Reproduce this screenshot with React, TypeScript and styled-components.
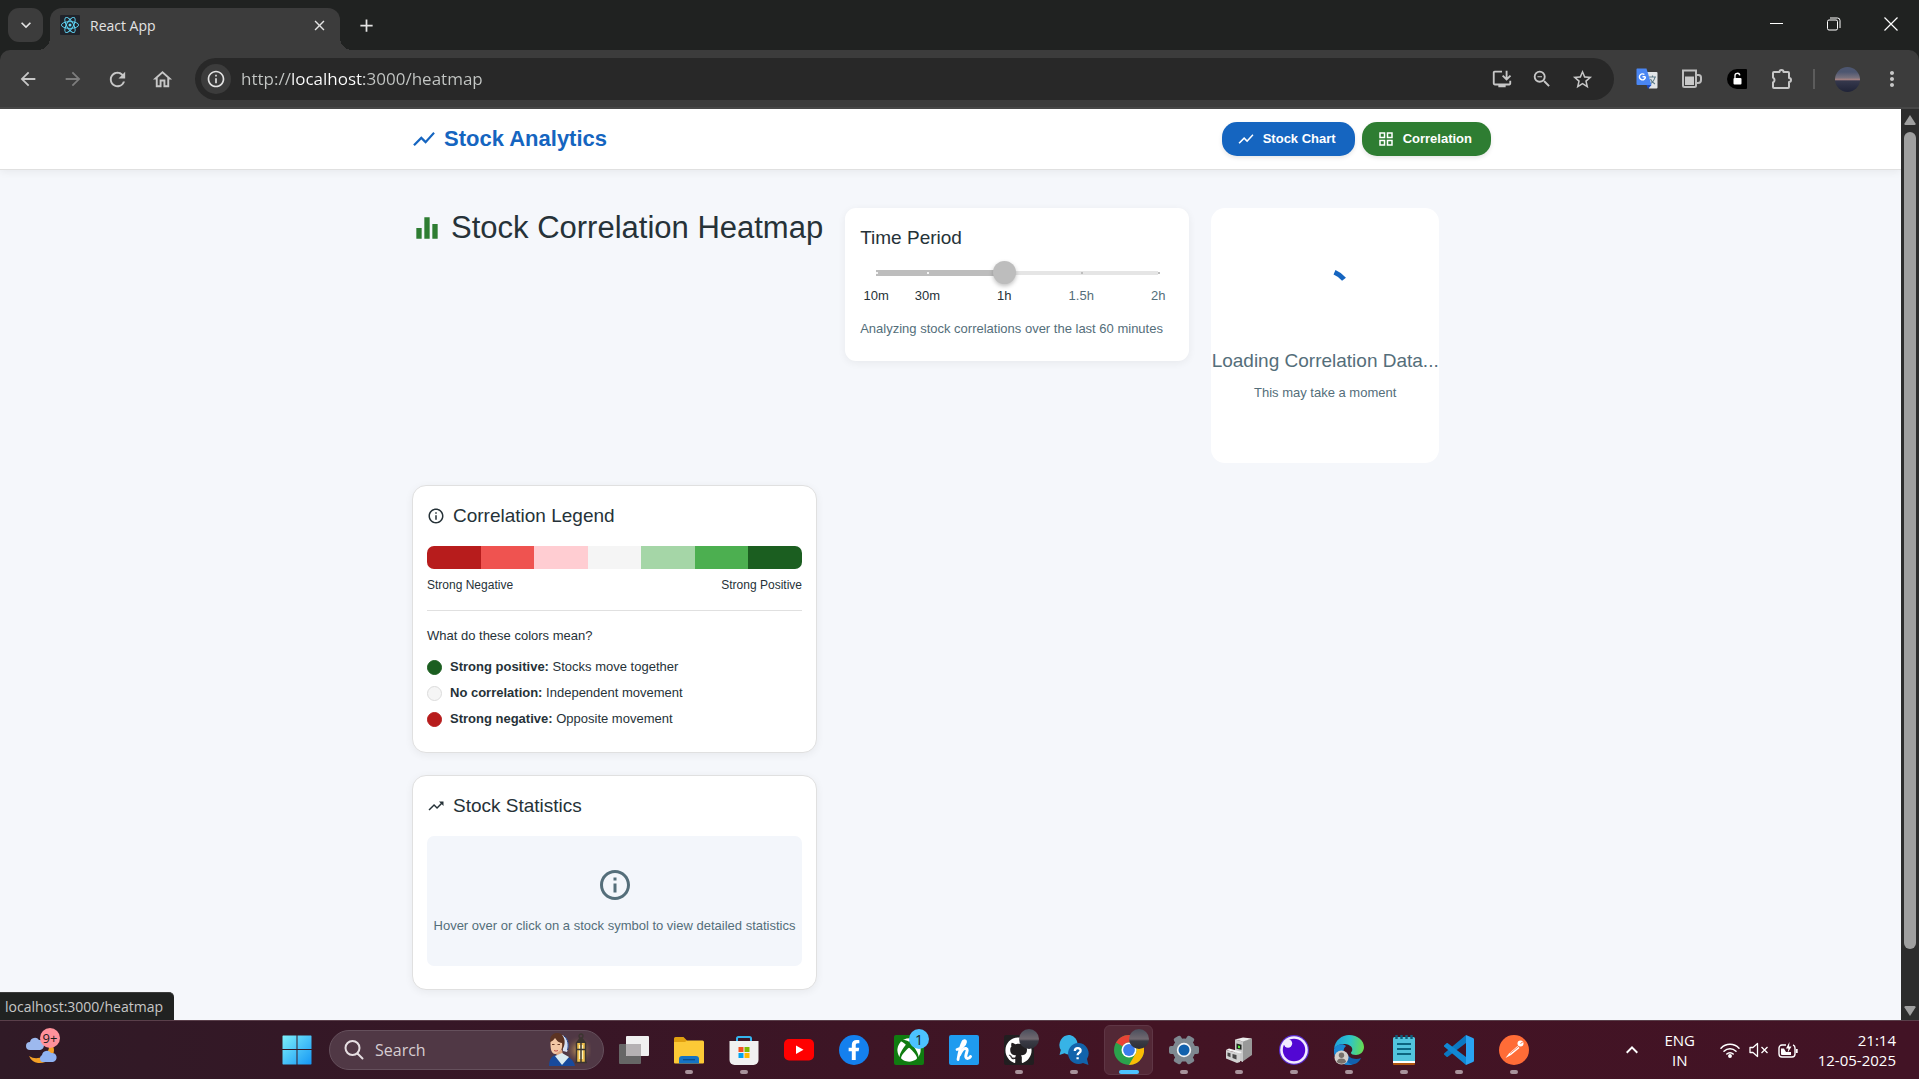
import React, { useState } from "react";
import styled, { createGlobalStyle, css } from "styled-components";
import {
  MdShowChart,
  MdOutlineGridView,
  MdEqualizer,
  MdInfoOutline,
  MdTrendingUp,
  MdArrowBack,
  MdArrowForward,
  MdRefresh,
  MdOutlineHome,
  MdStarBorder,
  MdZoomOut,
  MdMoreVert,
  MdOutlineInstallDesktop,
  MdKeyboardArrowDown,
  MdKeyboardArrowUp,
  MdClose,
  MdAdd,
} from "react-icons/md";
import { FaFacebookF, FaXbox, FaGithub } from "react-icons/fa";

const uiFont = `"Open Sans", "Noto Sans", sans-serif`;
const appFont = `"Liberation Sans", Arial, sans-serif`;

const GlobalStyle = createGlobalStyle`
  *, *::before, *::after { box-sizing: border-box; }
  body { margin: 0; background: #202221; font-family: ${appFont}; }
  button, input { font: inherit; color: inherit; border: 0; background: none; padding: 0; margin: 0; }
  svg { display: block; flex: none; }
  h1, h2, h3, p, ul { margin: 0; padding: 0; }
`;

const Desktop = styled.div`
  display: flex;
  flex-direction: column;
  height: 100vh;
  overflow: hidden;
`;

/* ---------- browser window ---------- */

const TabStrip = styled.header`
  display: flex;
  align-items: flex-start;
  height: 50px;
  padding: 8px 0 0 8px;
  background: #202221;
  color: #e3e3e3;
  font-family: ${uiFont};
`;

const TabSearch = styled.button`
  display: grid;
  place-items: center;
  width: 35px;
  height: 34px;
  margin-right: 7px;
  border-radius: 11px;
  background: #3c3c3c;
`;

const Tab = styled.div`
  position: relative;
  display: flex;
  align-items: center;
  gap: 10px;
  width: 290px;
  height: 42px;
  padding: 0 12px 8px 10px;
  border-radius: 12px 12px 0 0;
  background: #3c3c3c;
  font-size: 14px;

  &::before,
  &::after {
    content: "";
    position: absolute;
    bottom: 0;
    width: 12px;
    height: 12px;
  }
  &::before {
    right: 100%;
    background: radial-gradient(circle at 0 0, transparent 12px, #3c3c3c 12px);
  }
  &::after {
    left: 100%;
    background: radial-gradient(circle at 100% 0, transparent 12px, #3c3c3c 12px);
  }
`;

const TabTitle = styled.span`
  flex: 1;
`;

const PlainButton = styled.button`
  display: grid;
  place-items: center;
`;

const NewTab = styled(PlainButton)`
  width: 32px;
  height: 34px;
  margin-left: 10px;
`;

const WindowControls = styled.div`
  display: flex;
  margin-left: auto;
`;

const WindowButton = styled(PlainButton)`
  width: 57px;
  height: 32px;
  color: #fff;
`;

const ToolbarBack = styled.div`
  background: #202221;
`;

const Toolbar = styled.div`
  display: flex;
  align-items: center;
  height: 59px;
  padding: 1px 15px 0 9px;
  border-bottom: 2px solid #474747;
  border-radius: 10px 10px 0 0;
  background: #3c3c3c;
  color: #c7c7c7;
  font-family: ${uiFont};
`;

const ToolButton = styled(PlainButton)<{ $dim?: boolean; $w?: number }>`
  width: ${(p) => p.$w ?? 45}px;
  height: 36px;
  color: ${(p) => (p.$dim ? "#7d7d7d" : "inherit")};
`;

const Omnibox = styled.div`
  display: flex;
  align-items: center;
  flex: 1;
  height: 42px;
  margin: 0 10px 0 6px;
  padding: 0 12px 0 6px;
  border-radius: 21px;
  background: #282828;
`;

const SiteInfo = styled(PlainButton)`
  width: 30px;
  height: 30px;
  border-radius: 50%;
  background: #3c3c3c;
  color: #e3e3e3;
`;

const Address = styled.input`
  flex: 1;
  min-width: 0;
  margin-left: 10px;
  font-size: 17px;
  line-height: 24px;
  outline: 0;
  color: transparent;
  background: linear-gradient(90deg, #c4c7c5 50px, #fff 50px, #fff 123px, #c4c7c5 123px);
  background-clip: text;
`;

const Separator = styled.span`
  width: 2px;
  height: 20px;
  margin: 0 20px 0 9px;
  background: #5c5c5c;
`;

const Viewport = styled.div`
  position: relative;
  display: flex;
  flex: 1;
  min-height: 0;
`;

const Page = styled.div`
  flex: 1;
  overflow: hidden;
  background: #f5f7fb;
  color: #263238;
`;

const ScrollBar = styled.div`
  display: flex;
  flex-direction: column;
  align-items: center;
  width: 18px;
  padding: 5px 0 3px;
  background: #2c2c2c;
`;

const ScrollThumb = styled.div`
  width: 12px;
  flex: 1;
  margin: 6px 0 56px;
  border-radius: 6px;
  background: #9f9f9f;
`;

const StatusBubble = styled.div`
  position: absolute;
  left: 0;
  bottom: 0;
  height: 28px;
  padding: 0 11px 0 5px;
  border-top: 1px solid #3c3c3c;
  border-radius: 0 5px 0 0;
  background: #202221;
  color: #c7c7c7;
  font-family: ${uiFont};
  font-size: 14px;
  line-height: 28px;
`;

/* ---------- stock app ---------- */

const AppBar = styled.div`
  position: relative;
  padding: 0 24px;
  border-bottom: 1px solid #e0e0e0;
  background: #fff;
  box-shadow: 0 2px 8px rgba(0, 0, 0, 0.06);
`;

const AppBarInner = styled.div`
  display: flex;
  align-items: center;
  justify-content: space-between;
  max-width: 1081px;
  height: 60px;
  margin: 0 auto;
`;

const Brand = styled.div`
  display: flex;
  align-items: center;
  gap: 7px;
  padding-left: 1px;
  color: #1565c0;
  font-size: 22px;
  font-weight: 700;
`;

const Nav = styled.nav`
  display: flex;
  gap: 7px;
`;

const NavLink = styled.a<{ $color: string }>`
  display: flex;
  align-items: center;
  gap: 8px;
  height: 34px;
  padding: 0 19px 0 15px;
  border-radius: 15px;
  background: ${(p) => p.$color};
  color: #fff;
  font-size: 13px;
  font-weight: 700;
  line-height: 32px;
  padding-bottom: 1px;
  text-decoration: none;
  box-shadow: 0 2px 4px rgba(0, 0, 0, 0.1);
`;

const Content = styled.main`
  display: flex;
  flex-wrap: wrap;
  align-items: flex-start;
  gap: 22px;
  max-width: 1079px;
  margin: 0 auto;
  padding: 38px 0;
`;

const PageTitle = styled.h1`
  display: flex;
  align-items: center;
  gap: 8px;
  min-width: 411px;
  height: 40px;
  font-size: 31px;
  font-weight: 400;
  white-space: nowrap;

  svg {
    color: #2e7d32;
  }
`;

const cardBase = css`
  border-radius: 14px;
  background: #fff;
`;

const PeriodCard = styled.section`
  ${cardBase};
  width: 344px;
  padding: 17px 15px 22px;
  border-radius: 11px;
  box-shadow: 0 2px 8px rgba(0, 0, 0, 0.06);
`;

const CardTitle = styled.h2`
  display: flex;
  align-items: center;
  gap: 8px;
  font-size: 19px;
  font-weight: 400;
  line-height: 26px;
`;

const SliderWrap = styled.div`
  position: relative;
  margin: 10px 5px 0;
`;

const Range = styled.input<{ $fill: number }>`
  display: block;
  width: 100%;
  height: 23px;
  appearance: none;
  outline: 0;

  &::-webkit-slider-runnable-track {
    height: 23px;
    background:
      linear-gradient(#bdbdbd, #bdbdbd) 11px 50% / ${(p) => p.$fill}% 6px no-repeat,
      linear-gradient(#e5e5e5, #e5e5e5) 50% 50% / calc(100% - 22px) 4px no-repeat;
  }
  &::-webkit-slider-thumb {
    appearance: none;
    position: relative;
    z-index: 2;
    width: 23px;
    height: 23px;
    border-radius: 50%;
    background: #bdbdbd;
    box-shadow: 0 2px 4px rgba(0, 0, 0, 0.25);
  }
`;

const MarkRow = styled.div`
  display: grid;
  grid-template-columns: 20fr 30fr 30fr 30fr 0;
`;

const TickRow = styled(MarkRow)`
  position: absolute;
  top: 11px;
  left: 11px;
  right: 11px;
  pointer-events: none;
`;

const Tick = styled.span<{ $light?: boolean; $hidden?: boolean }>`
  width: 2px;
  height: 2px;
  visibility: ${(p) => (p.$hidden ? "hidden" : "visible")};
  background: ${(p) => (p.$light ? "#f5f5f5" : "#bdbdbd")};
`;

const LabelRow = styled(MarkRow)`
  margin: 2px 11px 0;
  font-size: 13px;
  line-height: 20px;
`;

const MarkLabel = styled.span<{ $active: boolean }>`
  display: flex;
  justify-content: center;
  width: 0;
  white-space: nowrap;
  color: ${(p) => (p.$active ? "#263238" : "#546e7a")};
`;

const Muted = styled.p`
  color: #546e7a;
  font-size: 13px;
  line-height: 20px;
  white-space: nowrap;
`;

const PeriodNote = styled(Muted)`
  margin-top: 13px;
`;

const LoadingCard = styled.section`
  ${cardBase};
  display: flex;
  flex-direction: column;
  align-items: center;
  width: 228px;
  padding: 59px 0 60px;

  h2 {
    margin: 27px 0 9px;
    color: #546e7a;
    font-size: 19px;
    font-weight: 400;
    line-height: 26px;
    white-space: nowrap;
  }
`;

const Sidebar = styled.aside`
  display: flex;
  flex-direction: column;
  gap: 22px;
  width: 405px;
  margin-left: 1px;
`;

const PanelCard = styled.section`
  ${cardBase};
  padding: 17px 14px 23px;
  border: 1px solid #e0e0e0;
  box-shadow: 0 2px 8px rgba(0, 0, 0, 0.06);
`;

const Scale = styled.div`
  display: grid;
  grid-template-columns: repeat(7, 1fr);
  height: 23px;
  margin-top: 17px;
  border-radius: 7px;
  overflow: hidden;
`;

const Swatch = styled.span<{ $color: string }>`
  background: ${(p) => p.$color};
`;

const ScaleLabels = styled.div`
  display: flex;
  justify-content: space-between;
  margin-top: 7px;
  padding-bottom: 16px;
  border-bottom: 1px solid #e0e0e0;
  font-size: 12px;
  line-height: 18px;
`;

const LegendQuestion = styled.h3`
  margin-top: 15px;
  font-size: 13px;
  font-weight: 400;
  line-height: 20px;
`;

const LegendList = styled.ul`
  display: grid;
  gap: 6px;
  margin-top: 11px;
  list-style: none;
`;

const LegendItem = styled.li`
  display: flex;
  align-items: center;
  gap: 8px;
  font-size: 13px;
  line-height: 20px;
`;

const Dot = styled.span<{ $color: string; $outlined?: boolean }>`
  width: 15px;
  height: 15px;
  border: 1px solid ${(p) => (p.$outlined ? "#dcdcdc" : p.$color)};
  border-radius: 50%;
  background: ${(p) => p.$color};
`;

const EmptyState = styled.div`
  display: flex;
  flex-direction: column;
  align-items: center;
  gap: 13px;
  margin-top: 17px;
  padding: 31px 0 30px;
  border-radius: 7px;
  background: #f3f6fb;
  color: #546e7a;
`;

/* ---------- taskbar ---------- */

const TaskBar = styled.footer`
  display: flex;
  align-items: center;
  height: 59px;
  border-top: 1px solid #5a3f4a;
  background: linear-gradient(90deg, #301a26, #381626 30%, #431424 60%, #421325);
  color: #fff;
  font-family: ${uiFont};
`;

const Weather = styled.button`
  position: relative;
  width: 40px;
  height: 40px;
  margin: 0 216px 0 22px;
`;

const Badge = styled.span<{ $color: string }>`
  position: absolute;
  top: -2px;
  right: 2px;
  display: grid;
  place-items: center;
  width: 20px;
  height: 20px;
  border-radius: 50%;
  background: ${(p) => p.$color};
  color: #1b1b1b;
  font-size: 13px;
  line-height: 20px;
`;

const StartButton = styled(PlainButton)`
  width: 38px;
  height: 44px;
  margin-right: 13px;
`;

const SearchBox = styled.label`
  display: flex;
  align-items: center;
  width: 275px;
  height: 40px;
  padding: 0 12px 0 14px;
  border: 1px solid #65505c;
  border-radius: 20px;
  background: #503845;
`;

const SearchInput = styled.input`
  flex: 1;
  min-width: 0;
  margin-left: 11px;
  outline: 0;
  font-size: 16px;
  &::placeholder {
    color: #d6cdd1;
    opacity: 1;
  }
`;

const TaskList = styled.div`
  display: flex;
  margin-left: 2px;
`;

const TaskButton = styled.button<{ $running?: boolean; $active?: boolean }>`
  position: relative;
  display: grid;
  place-items: center;
  width: 55px;
  height: 58px;

  &::before {
    content: "";
    position: absolute;
    inset: 4px 3px 4px 3px;
    border: 1px solid #5f3645;
    border-radius: 6px;
    background: #532836;
    display: ${(p) => (p.$active ? "block" : "none")};
  }
  &::after {
    content: "";
    position: absolute;
    bottom: 5px;
    width: ${(p) => (p.$active ? 20 : 8)}px;
    height: 4px;
    border-radius: 2px;
    background: ${(p) => (p.$active ? "#4cc2ff" : "#a8929b")};
    display: ${(p) => (p.$running || p.$active ? "block" : "none")};
  }
  svg {
    position: relative;
  }
`;

const Overlay = styled.span<{ $photo?: boolean }>`
  position: absolute;
  top: 8px;
  right: 7px;
  display: grid;
  place-items: center;
  width: 20px;
  height: 20px;
  border-radius: 50%;
  background: ${(p) =>
    p.$photo ? "linear-gradient(#4a4e5c, #716970 50%, #3a3b45 60%, #2c2e36)" : "#4cc2ff"};
  color: #1b1b1b;
  font-size: 14px;
`;

const Tray = styled.div`
  display: flex;
  align-items: center;
  margin-left: auto;
  padding-right: 23px;
  font-size: 15px;
  line-height: 20px;
`;

const Language = styled.button`
  width: 44px;
  margin: 0 18px 0 14px;
  text-align: center;
`;

const StatusIcons = styled.div`
  display: flex;
  align-items: center;
  gap: 9px;
`;

const Clock = styled.button`
  margin-left: 20px;
  text-align: right;
`;

const Avatar = styled.span`
  width: 25px;
  height: 25px;
  margin-right: 20px;
  border-radius: 50%;
  background: linear-gradient(#4d5670 20%, #76707d 42%, #a17f80 50%, #35384c 56%, #1f2337);
`;

/* ---------- drawings ---------- */

const ReactLogo = () => (
  <svg width="20" height="20" viewBox="0 0 20 20">
    <rect width="20" height="20" rx="1" fill="#20232a" />
    <circle cx="10" cy="10" r="1.5" fill="#61dafb" />
    <g fill="none" stroke="#61dafb" strokeWidth="0.9">
      <ellipse cx="10" cy="10" rx="8.6" ry="3.4" />
      <ellipse cx="10" cy="10" rx="8.6" ry="3.4" transform="rotate(60 10 10)" />
      <ellipse cx="10" cy="10" rx="8.6" ry="3.4" transform="rotate(120 10 10)" />
    </g>
  </svg>
);

const MinimizeIcon = () => (
  <svg width="14" height="14" viewBox="0 0 14 14">
    <path d="M0 6.5h13" stroke="currentColor" />
  </svg>
);

const RestoreIcon = () => (
  <svg width="14" height="14" viewBox="0 0 14 14" fill="none" stroke="currentColor">
    <rect x="0.5" y="3" width="10" height="10" rx="1.5" />
    <path d="M3 1h7.5a2.5 2.5 0 0 1 2.5 2.5V11" />
  </svg>
);

const CloseIcon = () => (
  <svg width="14" height="14" viewBox="0 0 14 14">
    <path d="M0.5 0.5l13 13M13.5 0.5l-13 13" stroke="currentColor" strokeWidth="1.2" />
  </svg>
);

const TranslateIcon = () => (
  <svg width="22" height="22" viewBox="0 0 22 22">
    <path d="M9 4h11.5a1 1 0 0 1 1 1v14.5a1 1 0 0 1-1 1H13z" fill="#e3e6e8" />
    <path d="M13 9h7M16.5 7.5V9M19 9c-.6 3-2.5 5.5-5 7M14.5 11c.8 2.5 2.5 4 4.5 5" fill="none" stroke="#607d8b" strokeWidth="1.1" />
    <path d="M10.5 17h5l-3.5 4z" fill="#1a49c2" />
    <path d="M1 .5h9.500l5 16.500H1.500a1 1 0 0 1-1-1V1z" fill="#4a86f3" />
    <path d="M9.4 8.700H6.500M9.400 8.700a3 3 0 1 1-1-2.100" fill="none" stroke="#fff" strokeWidth="1.4" />
  </svg>
);

const MugIcon = () => (
  <svg width="22" height="20" viewBox="0 0 22 20" fill="none" stroke="#bdbdbd" strokeWidth="2">
    <path d="M2 1.500h13v15a1.500 1.500 0 0 1-1.500 1.500h-10A1.500 1.500 0 0 1 2 16.500z" />
    <path d="M15 6h2.500a2.500 2.500 0 0 1 2.500 2.500v2.500a3 3 0 0 1-3 3h-2" />
    <path d="M4 7.500h9v8.500h-9z" fill="#c9c9c9" stroke="none" />
  </svg>
);

const LockExtensionIcon = () => (
  <svg width="20" height="20" viewBox="0 0 20 20">
    <path d="M10 0h9a1 1 0 0 1 1 1v18a1 1 0 0 1-1 1h-9A10 10 0 0 1 10 0z" fill="#000" />
    <rect x="6.5" y="9" width="8" height="6.5" rx="1" fill="#fff" />
    <path d="M8 9V7a2.400 2.400 0 0 1 4.800-.6" fill="none" stroke="#fff" strokeWidth="1.3" />
  </svg>
);

const PuzzleIcon = () => (
  <svg width="22" height="22" viewBox="0 0 22 22" fill="none" stroke="#c7c7c7" strokeWidth="2" strokeLinejoin="round">
    <path d="M3 4h5.500a2 2 0 0 1 4 0H17a1 1 0 0 1 1 1v5a2 2 0 0 1 0 4v5a1 1 0 0 1-1 1H3a1 1 0 0 1-1-1v-4.500a2.800 2.800 0 0 0 0-5V5a1 1 0 0 1 1-1z" />
  </svg>
);

const Spinner = () => (
  <svg width="54" height="54" viewBox="0 0 54 54" fill="none" role="img" aria-label="Loading">
    <path d="M36.500 5.200A24 24 0 0 1 46 12.300" stroke="#1565c0" strokeWidth="5" />
  </svg>
);

const WeatherIcon = () => (
  <svg width="40" height="40" viewBox="0 0 40 40">
    <path d="M27 13a13 13 0 0 1-20 13 12 12 0 0 0 9 7c9 1 16-6 16-13 0-3-2-6-5-7z" fill="#f4a126" />
    <path d="M8 20a4 4 0 0 1 0-8 5 5 0 0 1 9-2c3 0 5 2 5 5s-2 5-5 5z" fill="#9db9ee" />
    <path d="M20 32a4 4 0 0 1 0-7 5 5 0 0 1 9-2 4.500 4.500 0 0 1 2 9z" fill="#8fb2f2" />
  </svg>
);

const WindowsLogo = () => (
  <svg width="30" height="30" viewBox="0 0 30 30">
    <defs>
      <linearGradient id="win" x1="0" y1="0" x2="1" y2="1">
        <stop offset="0" stopColor="#7df0fb" />
        <stop offset="1" stopColor="#1597f5" />
      </linearGradient>
    </defs>
    <path d="M1 .5h13.500V14H.5V1zM15.500.5H29l.5.5v13h-14zM.5 15h14v14.500H1l-.5-.5zM15.500 15h14v14l-.5.5H15.500z" fill="url(#win)" />
  </svg>
);

const SearchGlass = () => (
  <svg width="20" height="22" viewBox="0 0 20 22" fill="none" stroke="#e6dfe2" strokeWidth="2" strokeLinecap="round">
    <circle cx="8.5" cy="9" r="7" />
    <path d="M13.500 14.500l5 5" />
  </svg>
);

const LampLady = () => (
  <svg width="44" height="36" viewBox="0 0 44 36">
    <defs>
      <radialGradient id="glow">
        <stop offset="0" stopColor="#d9a95c" />
        <stop offset="1" stopColor="#503845" stopOpacity="0" />
      </radialGradient>
    </defs>
    <circle cx="32" cy="18" r="15" fill="url(#glow)" />
    <path d="M15 3c6 2 8 10 5 17l-4-1z" fill="#d5dff2" />
    <path d="M17 4c4 3 5 9 3.500 14" stroke="#1d3f8a" fill="none" />
    <path d="M3 9C3 1 11-1 15 3c4 4 3 11 0 15L4 14z" fill="#5c3423" />
    <path d="M3.500 10c0 5 0 12 5 12s7.500-6 6.500-11C11 11 9 7 8 6c-1 2-3 3-4.500 4z" fill="#f2c7a5" />
    <path d="M5 12.500h2.500M10.500 12.500H13" stroke="#6b3e2a" />
    <path d="M7 18.500q2 1.200 4 0" stroke="#c4524b" fill="none" />
    <path d="M9 21.500l6-4 1 6-5 3z" fill="#e0a883" />
    <path d="M2 34c0-8 4-11 8-11 8 0 16 2 18 11z" fill="#174a9c" />
    <path d="M8 24l7-3 7 4-7 8z" fill="#dcebf0" />
    <circle cx="34" cy="4" r="2" fill="none" stroke="#3b3530" strokeWidth="1.3" />
    <path d="M28.500 11l4-5h3l4 5z" fill="#3b3530" />
    <rect x="29" y="11" width="10" height="19" fill="#eebf4c" />
    <path d="M32 13h4v14h-4z" fill="#fff3b8" />
    <path d="M29.500 11v19M34 11v19M38.500 11v19M29 17.500h10M28 30.500h12" stroke="#3b3530" strokeWidth="1.5" fill="none" />
  </svg>
);

const Icon30 = ({ children }: { children: React.ReactNode }) => (
  <svg width="30" height="30" viewBox="0 0 30 30">
    {children}
  </svg>
);

const TaskViewIcon = () => (
  <Icon30>
    <rect x="0" y="9" width="22" height="20" rx="1" fill="#666" />
    <rect x="7" y="1" width="23" height="20" rx="1" fill="#f0f0f0" />
    <path d="M7 9h15v12H8a1 1 0 0 1-1-1z" fill="#b5b1b3" />
  </Icon30>
);

const ExplorerIcon = () => (
  <Icon30>
    <path d="M0 3.500A1.500 1.500 0 0 1 1.500 2h8L13 5.500V12H0z" fill="#e0a010" />
    <path d="M0 7h11l2-1.500h15.500A1.500 1.500 0 0 1 30 7v20.500a1 1 0 0 1-1 1H1a1 1 0 0 1-1-1z" fill="#fcc936" />
    <path d="M5 28.500V24a3 3 0 0 1 3-3h14a3 3 0 0 1 3 3v4.500z" fill="#1573c4" />
    <path d="M9 24.700h12" stroke="#0b4a86" strokeWidth="1.2" />
  </Icon30>
);

const StoreIcon = () => (
  <Icon30>
    <path d="M8 7V3.500A1.500 1.500 0 0 1 9.500 2h11A1.500 1.500 0 0 1 22 3.500V7" fill="none" stroke="#35b4ee" strokeWidth="2" />
    <path d="M.5 6h29v19a5 5 0 0 1-5 5h-19a5 5 0 0 1-5-5z" fill="#f1f1f1" />
    <path d="M9.500 12h5v5h-5z" fill="#f25022" />
    <path d="M15.500 12h5v5h-5z" fill="#7fba00" />
    <path d="M9.500 18h5v5h-5z" fill="#00a4ef" />
    <path d="M15.500 18h5v5h-5z" fill="#ffb900" />
  </Icon30>
);

const YouTubeIcon = () => (
  <Icon30>
    <rect y="4" width="30" height="21.5" rx="5" fill="#f00" />
    <path d="M12 10.500v8.500l7.500-4.200z" fill="#fff" />
  </Icon30>
);

const FacebookIcon = () => (
  <Icon30>
    <circle cx="15" cy="15" r="15" fill="#1480ee" />
    <FaFacebookF x="5" y="5" size={20} color="#fff" />
  </Icon30>
);

const XboxIcon = () => (
  <Icon30>
    <rect width="30" height="30" rx="2" fill="#107c10" />
    <FaXbox x="3" y="3" size={24} color="#fff" />
  </Icon30>
);

const HIcon = () => (
  <Icon30>
    <rect width="30" height="30" rx="2" fill="#1f9bef" />
    <g fill="none" stroke="#fff" strokeLinecap="round" strokeLinejoin="round">
      <path d="M8 14.500c4-1 8-4 8.500-7.500.2-2-2-2-3 .5C12 11 10 18 9 24.500" strokeWidth="2.8" />
      <path d="M10.500 20c2-5 4.500-7 6.500-6.500s1 3 .2 5.500c-.7 2.500-.5 4.500 1.300 4.500 1.300 0 2.300-.8 3-2" strokeWidth="3" />
    </g>
  </Icon30>
);

const GithubIcon = () => (
  <Icon30>
    <rect width="30" height="30" rx="2" fill="#211e20" />
    <FaGithub x="1" y="2" size={27} color="#fff" />
  </Icon30>
);

const HelpIcon = () => (
  <Icon30>
    <path d="M11 0a10 10 0 0 1 0 19.500c-2.500 0-4-.4-5.500-1.200L.5 20l1.300-5A10 10 0 0 1 11 0z" fill="#37b3e6" />
    <path d="M19 8a10.500 10.500 0 0 1 9 16l1.500 6-5.500-2A10.500 10.500 0 1 1 19 8z" fill="#1263ab" />
    <path d="M15.800 16c.2-4.200 6.200-3.600 5.800-.2-.2 2-3 2-3 4.500M18.600 22.200v2" fill="none" stroke="#fff" strokeWidth="2.3" />
  </Icon30>
);

const ChromeIcon = () => (
  <Icon30>
    <circle cx="15" cy="15" r="15" fill="#2ba24c" />
    <path d="M15 0a15 15 0 0 1 13 7.500H15a7.500 7.500 0 0 0-6.500 3.800L2 7.500A15 15 0 0 1 15 0z" fill="#ea4335" />
    <path d="M28 7.500A15 15 0 0 1 15 30l6.500-11.200A7.500 7.500 0 0 0 15 7.500z" fill="#fbbc05" />
    <circle cx="15" cy="15" r="7.5" fill="#fff" />
    <circle cx="15" cy="15" r="5.9" fill="#3b7ded" />
  </Icon30>
);

const SettingsIcon = () => (
  <Icon30>
    <g fill="#7e8890">
      <circle cx="15" cy="15" r="11.5" />
      {[30, 90, 150].map((a) => (
        <rect key={a} x="11" y="0" width="8" height="30" rx="2" transform={`rotate(${a} 15 15)`} />
      ))}
    </g>
    <circle cx="15" cy="15" r="7.2" fill="#f4f6f8" />
    <circle cx="15" cy="15" r="5.5" fill="#1161ad" />
  </Icon30>
);

const DeviceIcon = () => (
  <Icon30>
    <path d="M18 6l10-2.500V20l-10 7z" fill="#999" />
    <path d="M11 4.500L19 2.500l9 1L19 6.500z" fill="#ececec" />
    <path d="M11 4.500l8 2V27l-8-3z" fill="#c9c9c9" />
    <path d="M12.500 8.500l5 1.200v5l-5-1z" fill="#20251f" />
    <path d="M14 10.500l2 .4v2.400l-2-.4z" fill="#57ea3f" />
    <path d="M2 15l3-1.500 13 3.500-2 1.500z" fill="#f4f4f4" />
    <path d="M2 15l14 3.500V27l-3 1-11-4.500z" fill="#d2d2d2" />
    <path d="M3.500 17.500l3 .8v4l-3-1.200zM8.500 19l4 1v4.500l-4-1.500z" fill="#4a4a4a" />
  </Icon30>
);

const InsomniaIcon = () => (
  <Icon30>
    <circle cx="15" cy="15" r="15" fill="#5a2bd0" />
    <circle cx="15" cy="15" r="13.8" fill="#f1eaff" />
    <circle cx="15" cy="15" r="11.2" fill="#5207d3" />
    <circle cx="9" cy="8.5" r="4.2" fill="#f1eaff" />
  </Icon30>
);

const EdgeIcon = () => (
  <Icon30>
    <defs>
      <linearGradient id="edge" x1="0" y1="0.4" x2="1" y2="0.5">
        <stop offset="0" stopColor="#1f9fdc" />
        <stop offset="0.5" stopColor="#2cc3cd" />
        <stop offset="1" stopColor="#68dc50" />
      </linearGradient>
    </defs>
    <path d="M0 15a15 14 0 0 0 15 15c5 0 10-2 12-7-5 2-12 1-14-5z" fill="#1160ae" />
    <path d="M0 14C1 5 8 0 15 0c9 0 15 6 15 12 0 5-4 8-8 8-3 0-5-1-5-2s2-2 1-5C16 8 4 7 0 14z" fill="url(#edge)" />
    <path d="M0 14c2-5 9-6 12-3-4 3-3 11 1 15 1 2 4 3.500 6 3.500C8 32-1 24 0 14z" fill="#1a86d4" />
    <circle cx="7.5" cy="22.5" r="7" fill="#d3cfcb" />
    <circle cx="7.5" cy="20.3" r="2.7" fill="#77706b" />
    <path d="M2.800 27a4.800 4.300 0 0 1 9.400 0 7 7 0 0 1-9.400 0z" fill="#77706b" />
  </Icon30>
);

const NotepadIcon = () => (
  <Icon30>
    <path d="M4 26h22v3a1 1 0 0 1-1 1H5a1 1 0 0 1-1-1z" fill="#b1560f" />
    <path d="M4 25h22v3H4z" fill="#fff" />
    <path d="M4 3.500A1.500 1.500 0 0 1 5.500 2h19A1.500 1.500 0 0 1 26 3.500V26H4z" fill="#52c4dd" />
    <path d="M8 9h14M8 14h14M8 19h14" stroke="#0c6580" strokeWidth="1.8" />
    <path d="M7.500 0v4M12.500 0v4M17.500 0v4M22.500 0v4" stroke="#0f5f7c" strokeWidth="2.4" />
  </Icon30>
);

const CodeIcon = () => (
  <Icon30>
    <path d="M0 19.500l2.500 2.300c.4.300.9.300 1.300 0L22 8V0L.3 18.300a.9.900 0 0 0-.3 1.200z" fill="#0b78c2" />
    <path d="M0 10.500l2.500-2.300c.4-.3.900-.3 1.300 0L22 22v8L.3 11.700a.9.900 0 0 1-.3-1.200z" fill="#1188d4" />
    <path d="M22 0l7 3a1.500 1.500 0 0 1 1 1.400v21.200a1.500 1.500 0 0 1-1 1.400l-7 3z" fill="#2aa3f2" />
  </Icon30>
);

const PostmanIcon = () => (
  <Icon30>
    <circle cx="15" cy="15" r="15" fill="#ff6c37" />
    <path d="M6.500 23l3.500-4.500 8.500-7.500 2 2-8.500 7z" fill="#fff" />
    <path d="M11 18.500l8-6.500" stroke="#ff6c37" strokeWidth="0.8" />
    <circle cx="21.5" cy="8.5" r="3" fill="#fff" />
    <path d="M21.500 8.500l2.300-1.500" stroke="#ff6c37" />
  </Icon30>
);

const WifiIcon = () => (
  <svg width="20" height="16" viewBox="0 0 20 16" fill="none" stroke="#fff" strokeWidth="1.5" strokeLinecap="round">
    <path d="M1 6.200a12.500 12.500 0 0 1 18 0M4 9.200a8.500 8.500 0 0 1 12 0M6.800 12a4.500 4.500 0 0 1 6.400 0" />
    <circle cx="10" cy="14" r="1.2" fill="#fff" />
  </svg>
);

const MuteIcon = () => (
  <svg width="20" height="16" viewBox="0 0 20 16" fill="none" stroke="#fff" strokeWidth="1.3" strokeLinejoin="round">
    <path d="M1 5.500h3l4.500-4v13L4 10.500H1z" />
    <path d="M12.500 5l6 6M18.500 5l-6 6" />
  </svg>
);

const BatteryIcon = () => (
  <svg width="20" height="18" viewBox="0 0 20 18" fill="none" stroke="#fff" strokeWidth="1.4">
    <path d="M8 4H4a3 3 0 0 0-3 3v6a3 3 0 0 0 3 3h10a3 3 0 0 0 3-3V7a3 3 0 0 0-2-3" />
    <path d="M18.800 8v4" strokeWidth="1.8" />
    <path d="M3 7.500h3L8 11h5v3H4a1 1 0 0 1-1-1z" fill="#fff" stroke="none" />
    <path d="M11.500 1L8 7.500h2.500L9.500 12l4-6.500h-2.500z" fill="#fff" stroke="none" />
  </svg>
);

/* ---------- data ---------- */

const marks = [
  { value: 10, label: "10m" },
  { value: 30, label: "30m" },
  { value: 60, label: "1h" },
  { value: 90, label: "1.5h" },
  { value: 120, label: "2h" },
];

const scaleColors = ["#b71c1c", "#ef5350", "#ffcdd2", "#f5f5f5", "#a5d6a7", "#4caf50", "#1b5e20"];

const legend = [
  { color: "#1b5e20", name: "Strong positive:", text: "Stocks move together" },
  { color: "#f5f5f5", name: "No correlation:", text: "Independent movement", outlined: true },
  { color: "#b71c1c", name: "Strong negative:", text: "Opposite movement" },
];

type Task = {
  name: string;
  icon: React.ReactNode;
  running?: boolean;
  active?: boolean;
  overlay?: React.ReactNode;
};

const tasks: Task[] = [
  { name: "Task view", icon: <TaskViewIcon /> },
  { name: "File Explorer", icon: <ExplorerIcon />, running: true },
  { name: "Microsoft Store", icon: <StoreIcon />, running: true },
  { name: "YouTube", icon: <YouTubeIcon /> },
  { name: "Facebook", icon: <FacebookIcon /> },
  { name: "Xbox", icon: <XboxIcon />, overlay: <Overlay>1</Overlay> },
  { name: "H app", icon: <HIcon /> },
  { name: "GitHub", icon: <GithubIcon />, running: true, overlay: <Overlay $photo /> },
  { name: "Get Help", icon: <HelpIcon />, running: true },
  { name: "Chrome", icon: <ChromeIcon />, active: true, overlay: <Overlay $photo /> },
  { name: "Settings", icon: <SettingsIcon />, running: true },
  { name: "Devices", icon: <DeviceIcon />, running: true },
  { name: "Insomnia", icon: <InsomniaIcon />, running: true },
  { name: "Edge", icon: <EdgeIcon />, running: true },
  { name: "Notepad", icon: <NotepadIcon />, running: true },
  { name: "Visual Studio Code", icon: <CodeIcon />, running: true },
  { name: "Postman", icon: <PostmanIcon />, running: true },
];

/* ---------- sections ---------- */

const BrowserChrome = () => (
  <>
    <TabStrip>
      <TabSearch aria-label="Search tabs">
        <MdKeyboardArrowDown size={20} />
      </TabSearch>
      <Tab>
        <ReactLogo />
        <TabTitle>React App</TabTitle>
        <PlainButton aria-label="Close tab">
          <MdClose size={17} />
        </PlainButton>
      </Tab>
      <NewTab aria-label="New tab">
        <MdAdd size={21} />
      </NewTab>
      <WindowControls>
        <WindowButton aria-label="Minimize">
          <MinimizeIcon />
        </WindowButton>
        <WindowButton aria-label="Restore">
          <RestoreIcon />
        </WindowButton>
        <WindowButton aria-label="Close">
          <CloseIcon />
        </WindowButton>
      </WindowControls>
    </TabStrip>
    <ToolbarBack>
      <Toolbar>
        <ToolButton aria-label="Back" $w={37}>
          <MdArrowBack size={22} />
        </ToolButton>
        <ToolButton aria-label="Forward" $w={53} $dim>
          <MdArrowForward size={22} />
        </ToolButton>
        <ToolButton aria-label="Reload" $w={37}>
          <MdRefresh size={23} />
        </ToolButton>
        <ToolButton aria-label="Home" $w={53}>
          <MdOutlineHome size={23} />
        </ToolButton>
        <Omnibox>
          <SiteInfo aria-label="Site information">
            <MdInfoOutline size={20} />
          </SiteInfo>
          <Address aria-label="Address" defaultValue="http://localhost:3000/heatmap" />
          <ToolButton aria-label="Install" $w={40}>
            <MdOutlineInstallDesktop size={22} />
          </ToolButton>
          <ToolButton aria-label="Zoom" $w={40}>
            <MdZoomOut size={22} />
          </ToolButton>
          <ToolButton aria-label="Bookmark" $w={40}>
            <MdStarBorder size={23} />
          </ToolButton>
        </Omnibox>
        <ToolButton aria-label="Translate">
          <TranslateIcon />
        </ToolButton>
        <ToolButton aria-label="Mug extension">
          <MugIcon />
        </ToolButton>
        <ToolButton aria-label="Lock extension">
          <LockExtensionIcon />
        </ToolButton>
        <ToolButton aria-label="Extensions">
          <PuzzleIcon />
        </ToolButton>
        <Separator />
        <Avatar />
        <ToolButton aria-label="Menu" $w={24}>
          <MdMoreVert size={24} />
        </ToolButton>
      </Toolbar>
    </ToolbarBack>
  </>
);

const PeriodPanel = () => {
  const [minutes, setMinutes] = useState(60);
  const fill = ((minutes - 10) / 110) * 93;
  return (
    <PeriodCard>
      <CardTitle as="label" htmlFor="period">
        Time Period
      </CardTitle>
      <SliderWrap>
        <Range
          id="period"
          type="range"
          min={10}
          max={120}
          value={minutes}
          $fill={fill}
          onChange={(e) => setMinutes(Number(e.target.value))}
        />
        <TickRow>
          {marks.map((m) => (
            <Tick key={m.value} $light={m.value < minutes} $hidden={m.value === minutes} />
          ))}
        </TickRow>
        <LabelRow>
          {marks.map((m) => (
            <MarkLabel key={m.value} $active={m.value <= minutes}>
              {m.label}
            </MarkLabel>
          ))}
        </LabelRow>
      </SliderWrap>
      <PeriodNote>Analyzing stock correlations over the last {minutes} minutes</PeriodNote>
    </PeriodCard>
  );
};

const LegendPanel = () => (
  <PanelCard>
    <CardTitle>
      <MdInfoOutline size={18} />
      Correlation Legend
    </CardTitle>
    <Scale>
      {scaleColors.map((c) => (
        <Swatch key={c} $color={c} />
      ))}
    </Scale>
    <ScaleLabels>
      <span>Strong Negative</span>
      <span>Strong Positive</span>
    </ScaleLabels>
    <LegendQuestion>What do these colors mean?</LegendQuestion>
    <LegendList>
      {legend.map((l) => (
        <LegendItem key={l.name}>
          <Dot $color={l.color} $outlined={l.outlined} />
          <span>
            <b>{l.name}</b> {l.text}
          </span>
        </LegendItem>
      ))}
    </LegendList>
  </PanelCard>
);

const StatsPanel = () => (
  <PanelCard>
    <CardTitle>
      <MdTrendingUp size={18} />
      Stock Statistics
    </CardTitle>
    <EmptyState>
      <MdInfoOutline size={36} />
      <Muted>Hover over or click on a stock symbol to view detailed statistics</Muted>
    </EmptyState>
  </PanelCard>
);

const Taskbar = () => (
  <TaskBar>
    <Weather aria-label="Weather">
      <WeatherIcon />
      <Badge $color="#ff919b">9+</Badge>
    </Weather>
    <StartButton aria-label="Start">
      <WindowsLogo />
    </StartButton>
    <SearchBox>
      <SearchGlass />
      <SearchInput aria-label="Search" placeholder="Search" />
      <LampLady />
    </SearchBox>
    <TaskList>
      {tasks.map((t) => (
        <TaskButton key={t.name} aria-label={t.name} $running={t.running} $active={t.active}>
          {t.icon}
          {t.overlay}
        </TaskButton>
      ))}
    </TaskList>
    <Tray>
      <PlainButton aria-label="Hidden icons">
        <MdKeyboardArrowUp size={24} />
      </PlainButton>
      <Language>
        ENG
        <br />
        IN
      </Language>
      <StatusIcons>
        <WifiIcon />
        <MuteIcon />
        <BatteryIcon />
      </StatusIcons>
      <Clock>
        21:14
        <br />
        12-05-2025
      </Clock>
    </Tray>
  </TaskBar>
);

export default function App() {
  return (
    <Desktop>
      <GlobalStyle />
      <BrowserChrome />
      <Viewport>
        <Page>
          <AppBar>
            <AppBarInner>
              <Brand>
                <MdShowChart size={26} />
                Stock Analytics
              </Brand>
              <Nav>
                <NavLink href="/" $color="#1565c0">
                  <MdShowChart size={18} />
                  Stock Chart
                </NavLink>
                <NavLink href="/heatmap" $color="#2e7d32">
                  <MdOutlineGridView size={18} />
                  Correlation
                </NavLink>
              </Nav>
            </AppBarInner>
          </AppBar>
          <Content>
            <PageTitle>
              <MdEqualizer size={32} />
              Stock Correlation Heatmap
            </PageTitle>
            <PeriodPanel />
            <LoadingCard>
              <Spinner />
              <h2>Loading Correlation Data...</h2>
              <Muted>This may take a moment</Muted>
            </LoadingCard>
            <Sidebar>
              <LegendPanel />
              <StatsPanel />
            </Sidebar>
          </Content>
        </Page>
        <ScrollBar>
          <svg width="14" height="12" viewBox="0 0 14 12">
            <path d="M7 1l5.500 8.500q.5 1.500-1 1.500h-9q-1.500 0-1-1.500z" fill="#9f9f9f" />
          </svg>
          <ScrollThumb />
          <svg width="14" height="12" viewBox="0 0 14 12">
            <path d="M7 11L1.500 2.500Q1 1 2.500 1h9q1.500 0 1 1.500z" fill="#9f9f9f" />
          </svg>
        </ScrollBar>
        <StatusBubble>localhost:3000/heatmap</StatusBubble>
      </Viewport>
      <Taskbar />
    </Desktop>
  );
}
